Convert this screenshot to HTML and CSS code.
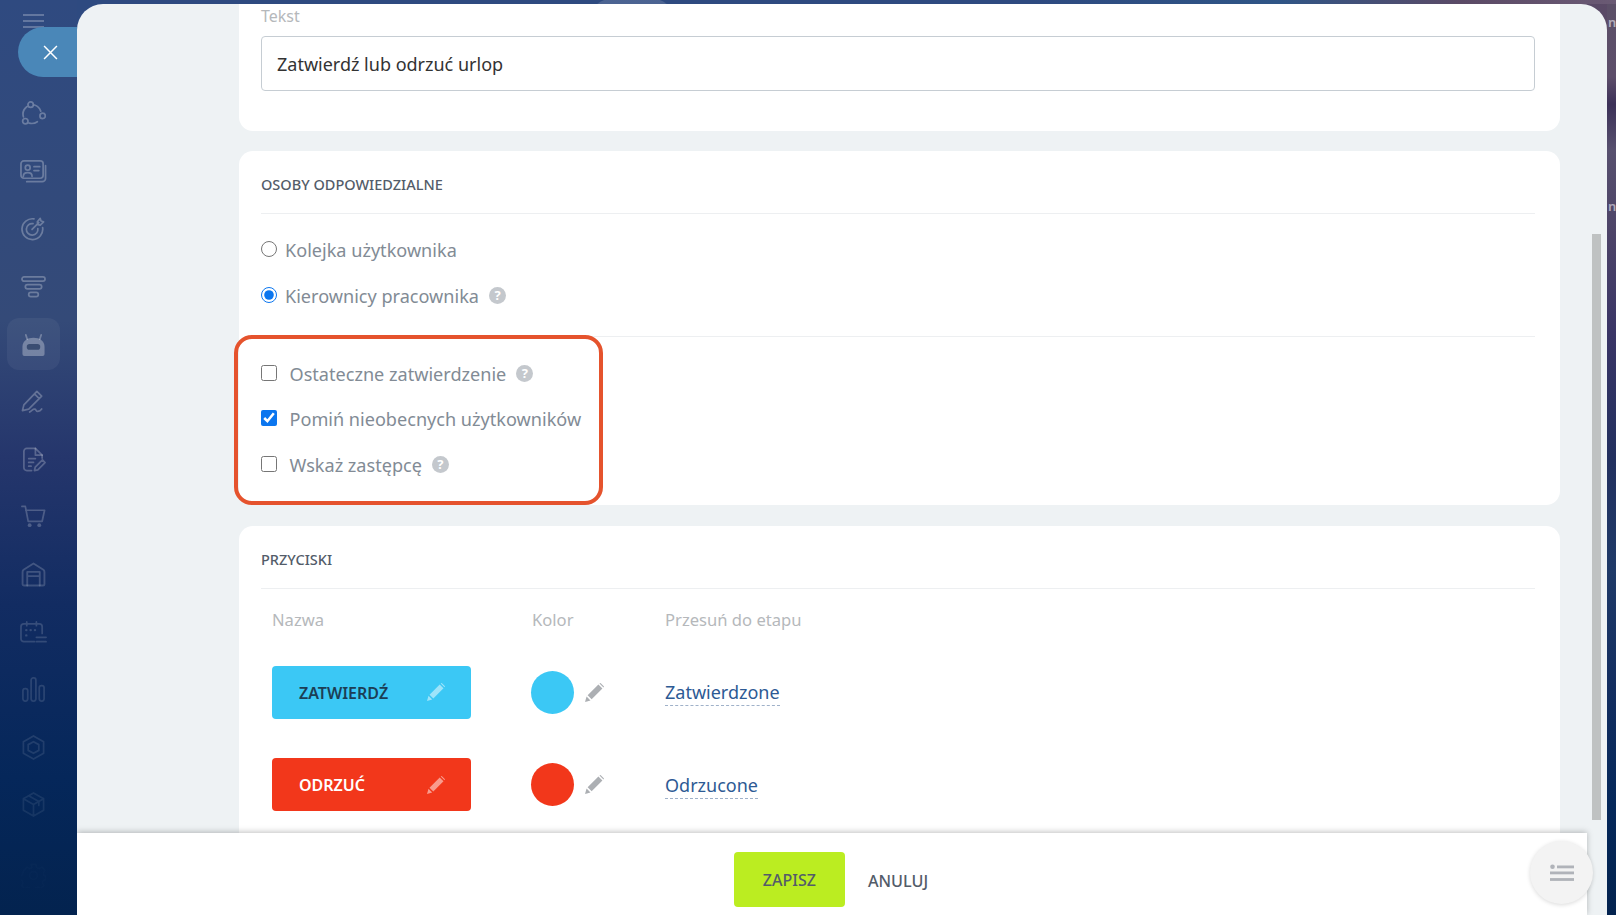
FILE: index.html
```html
<!DOCTYPE html>
<html lang="pl">
<head>
<meta charset="utf-8">
<title>Zatwierdź lub odrzuć urlop</title>
<link rel="stylesheet" href="styles.css">
</head>
<body>
<div class="app">
  <aside class="sidebar">
    <div class="burger"><span></span><span></span><span></span></div>
    <nav class="nav">
      <div class="nav-item"><svg viewBox="0 0 26 26"><circle cx="10" cy="3.800" r="2.800"/><circle cx="22.500" cy="15.500" r="2.800"/><circle cx="4.500" cy="21" r="2.800"/><path d="M6 6A10 10 0 0 0 2.500 16.500M14 4.200A10 10 0 0 1 20.500 10.500M8.500 23A10 10 0 0 0 17 21.500"/></svg></div>
      <div class="nav-item"><svg class="wide" viewBox="0 0 28 24"><rect x="1" y="1" width="23" height="18" rx="3"/><path d="M26.500 6v13a3.500 3.500 0 0 1-3.500 3.500H7"/><circle cx="8" cy="8" r="2.500"/><path d="M3.500 17c0-5 9-5 9 0M14.500 7h6M14.500 11h5"/></svg></div>
      <div class="nav-item"><svg viewBox="0 0 26 26"><path d="M22.500 12a10.800 10.800 0 1 1-9-9"/><path d="M17.500 13a6 6 0 1 1-5-5"/><path d="M11.500 14l7-7M17 6l3-3.500.8 2.700 2.700.8L20 9.500l-2.500-.5z"/></svg></div>
      <div class="nav-item"><svg viewBox="0 0 26 22"><rect x="1" y="1" width="24" height="4.500" rx="2.200"/><rect x="4.500" y="9" width="17" height="4.500" rx="2.200"/><rect x="8" y="17" width="10" height="4.500" rx="2.200"/></svg></div>
      <div class="nav-item active"><svg viewBox="0 0 26 24"><path class="solid" d="M1.500 22v-7.500C1.500 8.500 6.500 5 13 5s11.500 3.500 11.500 9.500V22a2 2 0 0 1-2 2h-19a2 2 0 0 1-2-2z"/><path d="M6.500 6.500L5 2M19.500 6.500L21 2"/><rect class="eyes" x="6" y="11.500" width="14" height="6" rx="3"/></svg></div>
      <div class="nav-item"><svg viewBox="0 0 26 26"><path d="M1.500 22.500l1.500-6L16.500 2.500l5 5L8 21zM14 5l5 5"/><path d="M9 24c3-2 3.500-3.500 5.500-3 1.500.5 1 2.500 3 2.300 2-.2 3-1 4-2.500"/></svg></div>
      <div class="nav-item"><svg viewBox="0 0 24 26"><path d="M10 24.500H5a3 3 0 0 1-3-3v-17a3 3 0 0 1 3-3h9l7 7v3"/><path d="M14 1.500v7h7M7 12h7M7 16h5M7 20h2.500"/><path d="M13 24.500l.8-3.500 7.500-7.500 2.700 2.700-7.500 7.500z"/></svg></div>
      <div class="nav-item"><svg viewBox="0 0 26 24"><path d="M1 1.500h3.500l3 15.500h14.500l2.500-11.500H5"/><circle class="solid" cx="9" cy="21" r="2"/><circle class="solid" cx="19" cy="21" r="2"/></svg></div>
      <div class="nav-item"><svg viewBox="0 0 24 24"><path d="M1.500 21V9.500c0-.8.400-1.500 1-2L12 1.500l9.500 6c.6.500 1 1.200 1 2V21a1.500 1.500 0 0 1-1.500 1.500H3A1.500 1.500 0 0 1 1.500 21z"/><path d="M6 22.500V9.500h12v13M6 13.500h12"/></svg></div>
      <div class="nav-item"><svg class="wide" viewBox="0 0 28 24"><path d="M15 21.500H4a3 3 0 0 1-3-3V6a3 3 0 0 1 3-3h16a3 3 0 0 1 3 3v7M7 1v4M17 1v4"/><path class="dots" d="M6.500 9.500h.1M11 9.500h.1M15.500 9.500h.1M6.500 15h.1"/><path d="M17 17h10M17 21.500h10"/></svg></div>
      <div class="nav-item"><svg viewBox="0 0 24 26"><rect x="1" y="12" width="5" height="13" rx="2.300"/><rect x="9.500" y="1" width="5" height="24" rx="2.300"/><rect x="18" y="9" width="5" height="16" rx="2.300"/></svg></div>
      <div class="nav-item"><svg viewBox="0 0 24 26"><path d="M12 1l10.500 6v12L12 25 1.500 19V7z"/><path d="M12 7l5.500 3v6L12 19l-5.500-3v-6z"/></svg></div>
      <div class="nav-item"><svg viewBox="0 0 24 26"><path d="M12 1l10.500 6v12L12 25 1.500 19V7zM1.500 7L12 13l10.500-6M12 13v12M7 4l10.500 6v4"/></svg></div>
      <div class="nav-item nav-gear"><svg viewBox="0 0 26 26"><path d="M10.500 1.500h5l.8 3.200 2.800 1.200 2.800-1.700 3 3.500-1.700 2.800.8 2.500 2 .8v3.500l-2.800.8-1 2.800 1.500 2.700-3.500 3-2.700-1.600-2.500 1-.8 3h-4l-.8-3-2.700-1-2.700 1.600-3.300-3 1.500-2.700-1-2.800-2.700-.8v-4l2.700-.8 1-2.800L3 7.500l3.300-3.300 2.800 1.700 2.400-1z"/><circle cx="13" cy="13" r="4"/></svg></div>
    </nav>
  </aside>

  <div class="main">
    <div class="topstrip"></div>
    <div class="workspace">
      <section class="panel">
        <div class="panel-col">
          <div class="scroll">
            <div class="card card-first">
              <div class="field-label">Tekst</div>
              <div class="text-input">Zatwierdź lub odrzuć urlop</div>
            </div>

            <div class="card card-people">
              <h2 class="card-title">OSOBY ODPOWIEDZIALNE</h2>
              <div class="radios">
                <label class="opt"><input type="radio" name="who"><span>Kolejka użytkownika</span></label>
                <label class="opt"><input type="radio" name="who" checked><span>Kierownicy pracownika</span><i class="help">?</i></label>
              </div>
              <div class="checks">
                <label class="opt"><input type="checkbox"><span>Ostateczne zatwierdzenie</span><i class="help">?</i></label>
                <label class="opt"><input type="checkbox" checked><span>Pomiń nieobecnych użytkowników</span></label>
                <label class="opt"><input type="checkbox"><span>Wskaż zastępcę</span><i class="help">?</i></label>
                <div class="highlight"></div>
              </div>
            </div>

            <div class="card card-buttons">
              <h2 class="card-title">PRZYCISKI</h2>
              <div class="btn-table">
                <div class="col-head">Nazwa</div>
                <div class="col-head">Kolor</div>
                <div class="col-head">Przesuń do etapu</div>

                <div class="btn-preview blue"><span>ZATWIERDŹ</span>
                  <svg class="pen" viewBox="0 0 18 18"><path d="M0 18l1.500-5.200 3.700 3.700zM2.500 11.700L12.700 1.500l3.800 3.800L6.300 15.500zM13.700.5l1-.5 3.300 3.300-.5 1z"/></svg>
                </div>
                <div class="color-cell"><span class="dot blue"></span>
                  <svg class="pen grey" viewBox="0 0 18 18"><path d="M0 18l1.500-5.200 3.700 3.700zM2.500 11.700L12.700 1.500l3.800 3.800L6.300 15.500zM13.700.5l1-.5 3.300 3.300-.5 1z"/></svg>
                </div>
                <div class="stage"><a class="stage-link">Zatwierdzone</a></div>

                <div class="btn-preview red"><span>ODRZUĆ</span>
                  <svg class="pen" viewBox="0 0 18 18"><path d="M0 18l1.500-5.200 3.700 3.700zM2.500 11.700L12.700 1.500l3.800 3.800L6.300 15.500zM13.700.5l1-.5 3.300 3.300-.5 1z"/></svg>
                </div>
                <div class="color-cell"><span class="dot red"></span>
                  <svg class="pen grey" viewBox="0 0 18 18"><path d="M0 18l1.500-5.200 3.700 3.700zM2.500 11.700L12.700 1.500l3.800 3.800L6.300 15.500zM13.700.5l1-.5 3.300 3.300-.5 1z"/></svg>
                </div>
                <div class="stage"><a class="stage-link">Odrzucone</a></div>
              </div>
            </div>
          </div>

          <footer class="footer">
            <button class="save">ZAPISZ</button>
            <button class="cancel">ANULUJ</button>
          </footer>
        </div>
        <div class="gutter"><div class="thumb"></div></div>

        <div class="fab"><svg viewBox="0 0 24 16"><circle cx="2.500" cy="2.300" r="2.300"/><rect x="7" y="1" width="17" height="2.800"/><rect y="7" width="24" height="2.800"/><rect y="13.600" width="24" height="2.800"/></svg></div>
      </section>
      <div class="edge">
        <div class="edge-text edge-a">n</div>
        <div class="edge-text edge-b">n</div>
      </div>
    </div>
  </div>

  <button class="close" aria-label="Zamknij"><svg viewBox="0 0 14 14"><path d="M1 1l12 12M13 1L1 13"/></svg></button>
</div>
</body>
</html>
```
FILE: styles.css
```css
* { box-sizing: border-box; }
html, body { margin: 0; height: 100%; }
body {
  font-family: "Noto Sans", "Open Sans", sans-serif;
  overflow: hidden;
  color: #535c69;
}
.app {
  position: relative;
  display: flex;
  width: 1616px;
  height: 915px;
  overflow: hidden;
}

/* sidebar */
.sidebar {
  width: 77px;
  flex: none;
  padding-top: 14px;
  background: linear-gradient(180deg, #2f4a80 0%, #344a78 35%, #25366c 50%, #122c62 66%, #05275a 85%, #03234f 100%);
}
.burger {
  display: flex;
  flex-direction: column;
  gap: 4px;
  width: 21px;
  margin: 0 0 57px 23px;
}
.burger span { height: 2px; background: rgba(255, 255, 255, .25); }
.nav {
  display: flex;
  flex-direction: column;
  align-items: center;
  padding-right: 10px;
  -webkit-mask-image: linear-gradient(180deg, #000 0%, #000 35%, rgba(0,0,0,.65) 60%, rgba(0,0,0,.25) 90%, rgba(0,0,0,.1) 100%);
  mask-image: linear-gradient(180deg, #000 0%, #000 35%, rgba(0,0,0,.65) 60%, rgba(0,0,0,.25) 90%, rgba(0,0,0,.1) 100%);
}
.nav-item {
  width: 53px;
  height: 52px;
  margin: 2.800px 0;
  display: flex;
  align-items: center;
  justify-content: center;
  border-radius: 12px;
}
.nav-item svg {
  width: 25px;
  height: 25px;
  fill: none;
  stroke: rgba(255, 255, 255, .28);
  stroke-width: 1.800;
  stroke-linecap: round;
  stroke-linejoin: round;
}
.nav-item svg.wide { width: 27px; height: 27px; }
.nav-item .solid { fill: rgba(255, 255, 255, .3); stroke: none; }
.nav-item .eyes { fill: #3a4d72; stroke: none; }
.nav-item .dots { stroke-width: 2.500; }
.nav-item.active { background: rgba(255, 255, 255, .05); }
.nav-gear { margin-top: 16px; opacity: .3; }

.close {
  position: absolute;
  left: 18px;
  top: 27px;
  width: 59px;
  height: 50px;
  padding: 0 0 0 5px;
  border: 0;
  border-radius: 25px 0 0 25px;
  background: #4a87b8;
  display: flex;
  align-items: center;
  justify-content: center;
}
.close svg { width: 15px; height: 15px; fill: none; stroke: #fff; stroke-width: 1.400; }

/* main */
.main { flex: 1; display: flex; flex-direction: column; min-width: 0; }
.topstrip {
  height: 4px;
  flex: none;
  background:
    radial-gradient(ellipse 36px 10px at 555px 6px, rgba(255,255,255,.14), rgba(255,255,255,.14) 95%, transparent),
    linear-gradient(90deg, #2e4a80 0%, #2e4a80 62%, #2f5586 78%, #5b4a66 90%, #6a5a74 100%);
}
.workspace {
  flex: 1;
  min-height: 0;
  display: flex;
  background: linear-gradient(90deg, #2e4a80 0%, #2e4a80 60%, #5b4a66 100%);
}
.panel {
  position: relative;
  flex: 1;
  min-width: 0;
  display: flex;
  background: #eef2f4;
  border-radius: 26px 26px 0 0;
  overflow: hidden;
}
.panel-col { width: 1510px; display: flex; flex-direction: column; flex: none; }
.scroll {
  flex: 1;
  min-height: 0;
  overflow: hidden;
  padding: 0 27px 0 162px;
  display: flex;
  flex-direction: column;
  gap: 20px;
}
.gutter { flex: 1; padding: 230px 5px 0 5px; }
.thumb { width: 9px; height: 586px; background: #bfc2c2; }
.edge {
  width: 9px;
  flex: none;
  background: linear-gradient(180deg, #5c5068 0%, #5d4e6a 8%, #3c3158 11%, #57506e 16%, #4d4468 25%, #3a3566 36%, #22305f 50%, #1f3a68 62%, #132e60 75%, #05285a 88%, #03234f 100%);
}
.edge-text {
  font: 600 13px/20px "Noto Sans", sans-serif;
  color: rgba(255, 255, 255, .55);
  padding-left: 1px;
}
.edge-a { margin-top: 8px; }
.edge-b { margin-top: 164px; }

/* cards */
.card {
  flex: none;
  background: #fff;
  border-radius: 14px;
  padding: 0 25px 0 22px;
}
.card-first {
  height: 127px;
  border-radius: 0 0 14px 14px;
}
.field-label {
  font-size: 16px;
  line-height: 25px;
  color: #b5b8bb;
}
.text-input {
  height: 55px;
  margin-top: 7px;
  padding: 0 15px;
  border: 1px solid #c6cdd3;
  border-radius: 4px;
  font-size: 18px;
  line-height: 55px;
  color: #333;
}
.card-title {
  margin: 0;
  height: 63px;
  padding-top: 21px;
  border-bottom: 1px solid #edeff1;
  font-size: 14.500px;
  line-height: 24px;
  font-weight: 500;
  color: #535c69;
}
.card-people { height: 354px; }
.card-buttons { height: 400px; margin-top: 1px; }
.radios {
  padding: 11.500px 0 18.500px;
  border-bottom: 1px solid #edeff1;
}
.radios .opt { height: 46px; }
.checks { position: relative; padding-top: 13px; }
.opt {
  display: flex;
  align-items: center;
  height: 45.500px;
  font-size: 18.100px;
  color: #828b95;
}
.opt span { padding-top: 2px; }
.opt input { margin: 0; width: 16px; height: 16px; flex: none; accent-color: #0b76ef; }
.radios .opt span { margin-left: 8px; }
.checks .opt span { margin-left: 12.500px; }
.help {
  width: 17px;
  height: 17px;
  margin: 2px 0 0 10px;
  border-radius: 50%;
  background: #c4c8cd;
  color: #fff;
  font: 700 13px/17px "Noto Sans", sans-serif;
  text-align: center;
}
.highlight {
  position: absolute;
  left: -27px;
  top: -2px;
  width: 369px;
  height: 170px;
  border: 4px solid #e5532d;
  border-radius: 18px;
  pointer-events: none;
}

/* buttons table */
.btn-table {
  display: grid;
  grid-template-columns: 260px 133px 1fr;
  grid-template-rows: 57px 92.500px 92.500px;
  padding-left: 11px;
  align-items: center;
}
.col-head {
  font-size: 16.600px;
  color: #b5b8bb;
  align-self: start;
  padding-top: 19px;
  line-height: 24px;
}
.btn-preview {
  display: flex;
  align-items: center;
  justify-content: space-between;
  width: 199px;
  height: 53px;
  padding: 0 26px 0 27px;
  border-radius: 4px;
  font-size: 16px;
  font-weight: 600;
}
.btn-preview span { padding-top: 1px; }
.btn-preview.blue { background: #3bc8f5; color: #1c3e55; }
.btn-preview.red { background: #f2371b; color: #fff; }
.pen { width: 18px; height: 18px; fill: rgba(255, 255, 255, .5); }
.pen.grey { fill: #acafb3; width: 19px; height: 19px; }
.color-cell { display: flex; align-items: center; gap: 11px; margin-left: -1px; }
.dot { width: 43px; height: 43px; border-radius: 50%; }
.dot.blue { background: #3bc8f5; }
.dot.red { background: #f2371b; }
.stage-link {
  font-size: 18px;
  line-height: 24px;
  color: #2d5a94;
  border-bottom: 1px dashed #9fb1c9;
  padding-bottom: 1px;
}

/* footer */
.footer {
  position: relative;
  height: 82px;
  flex: none;
  display: flex;
  align-items: center;
  justify-content: center;
  gap: 23px;
  padding: 10px 2px 0 0;
  background: #fff;
  box-shadow: 0 -1px 6px rgba(0, 0, 0, .25);
}
.save {
  width: 111px;
  height: 55px;
  border: 0;
  border-radius: 4px;
  background: #bbed21;
  color: #535c69;
  padding-top: 3px;
  font: 500 16px "Noto Sans", sans-serif;
}
.cancel {
  border: 0;
  padding: 4px 0 0;
  background: none;
  color: #535c69;
  font: 500 16.200px "Noto Sans", sans-serif;
}
.fab {
  position: absolute;
  left: 1453px;
  top: 837px;
  width: 63px;
  height: 63px;
  border-radius: 50%;
  background: #f3f3f3;
  box-shadow: 0 1px 4px rgba(0, 0, 0, .15);
  display: flex;
  align-items: center;
  justify-content: center;
}
.fab svg { width: 24px; height: 17px; fill: #b0b3b9; }
```
